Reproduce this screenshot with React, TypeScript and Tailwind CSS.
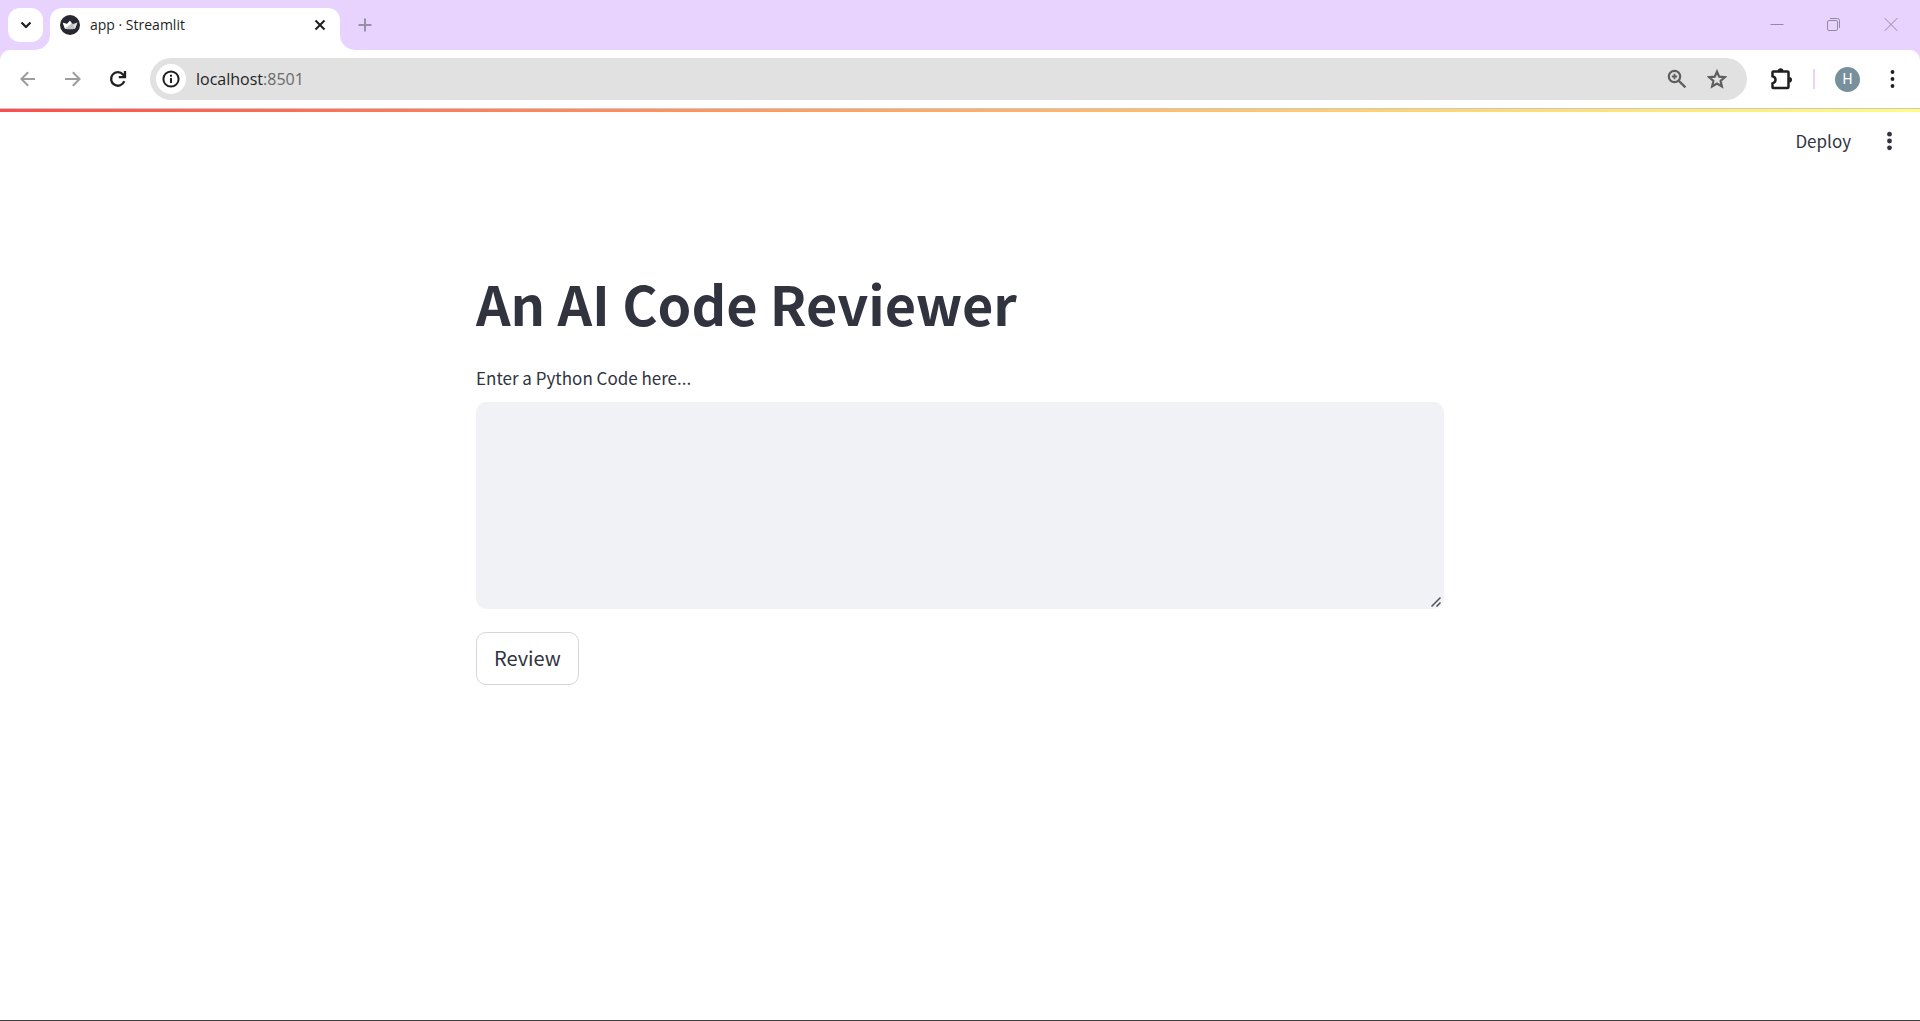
import React from "react";

const SOURCE = "font-['Noto_Sans_CJK_SC','Noto_Sans',sans-serif]";
const CHROME = "font-['Open_Sans','Noto_Sans',sans-serif]";

function Flare({ className }: { className: string }) {
  return (
    <svg className={className} width="15" height="15" viewBox="0 0 15 15" fill="#fff" aria-hidden="true">
      <path d="M15 0V15H0A15 15 0 0 0 15 0Z" />
    </svg>
  );
}

function Crown() {
  return (
    <svg width="20" height="20" viewBox="0 0 20 20" className="shrink-0" aria-hidden="true">
      <circle cx="10" cy="10" r="10" fill="#262730" />
      <path d="M2.800 7.800 7 9 10 5.800 12.800 9 17.400 7.400 15 13.800Q10 14.800 5 13.800Z" fill="#c4c4c6" />
      <path d="M2.800 7.800 7 9 10 5.800 11.400 8.800 7 12 5 13.800Z" fill="#fff" />
      <path d="M17.400 7.400 13.400 10.400 15 13.800Z" fill="#e4e4e4" />
    </svg>
  );
}

function TabStrip() {
  return (
    <div className="flex h-[50px] items-start bg-[#e8d3ff]">
      <button aria-label="Search tabs" className="mt-2 ml-2 flex h-[34px] w-[35px] shrink-0 items-center justify-center rounded-xl bg-white">
        <svg width="12" height="8" viewBox="0 0 12 8" fill="none" stroke="#1f1f1f" strokeWidth="2.2">
          <path d="M1.500 1.500 6 6l4.500-4.500" />
        </svg>
      </button>
      <div className="relative mt-2 ml-[7px] flex h-[42px] w-[290px] shrink-0 items-center rounded-t-xl bg-white pr-[14px] pb-2 pl-[10px]">
        <Flare className="absolute bottom-0 -left-[15px]" />
        <Flare className="absolute -right-[15px] bottom-0 -scale-x-100" />
        <Crown />
        <span className={`ml-[10px] flex-1 text-sm text-[#1f1f1f] ${CHROME}`}>app · Streamlit</span>
        <button aria-label="Close tab">
          <svg width="12" height="12" viewBox="0 0 12 12" stroke="#1f1f1f" strokeWidth="2">
            <path d="M1.500 1.500l9 9M10.500 1.500l-9 9" />
          </svg>
        </button>
      </div>
      <button aria-label="New tab" className="mt-[18px] ml-[18px]">
        <svg width="14" height="14" viewBox="0 0 14 14" stroke="#9b8ea9" strokeWidth="2">
          <path d="M7 .5v13M.5 7h13" />
        </svg>
      </button>
      <div className="mt-[17px] mr-[22px] ml-auto flex items-center gap-[43px]">
        <button aria-label="Minimize">
          <svg width="14" height="14" viewBox="0 0 14 14" stroke="#948a9f" fill="none"><path d="M.5 7.500h13" /></svg>
        </button>
        <button aria-label="Restore">
          <svg width="14" height="14" viewBox="0 0 14 14" stroke="#948a9f" fill="none">
            <rect x=".5" y="3.500" width="10" height="10" rx="1.500" />
            <path d="M3 1.500H10.500Q12.500 1.500 12.500 3.500V11" />
          </svg>
        </button>
        <button aria-label="Close">
          <svg width="14" height="14" viewBox="0 0 14 14" stroke="#948a9f" fill="none"><path d="M.7 1.200l12.600 12.600M13.300 1.200.7 13.800" /></svg>
        </button>
      </div>
    </div>
  );
}

function Toolbar() {
  return (
    <div className="bg-[#e8d3ff]">
      <div className="flex h-[58px] items-center rounded-t-[10px] bg-white pl-5">
        <button aria-label="Back">
          <svg width="16" height="16" viewBox="0 0 16 16" fill="none" stroke="#9d9d9d" strokeWidth="2">
            <path d="M15 8H2M8.200 1.200 1.400 8l6.800 6.800" />
          </svg>
        </button>
        <button aria-label="Forward" className="ml-[29px]">
          <svg width="16" height="16" viewBox="0 0 16 16" fill="none" stroke="#9d9d9d" strokeWidth="2">
            <path d="M0 8h14M7.800 1.200 14.600 8l-6.800 6.800" />
          </svg>
        </button>
        <button aria-label="Reload" className="ml-7">
          <svg width="18" height="18" viewBox="0 0 18 18" fill="none" stroke="#1f1f1f" strokeWidth="2.300">
            <path d="M15.300 11.200A6.800 6.800 0 1 1 14 4.400L16 6.700" />
            <path d="M16 1v6.200H9.800" />
          </svg>
        </button>
        <div className={`ml-[23px] flex h-[42px] flex-1 items-center rounded-full bg-[#e1e1e1] pr-5 pl-[6px] ${CHROME}`}>
          <button aria-label="Site information" className="flex size-[30px] items-center justify-center rounded-full bg-white">
            <svg width="18" height="18" viewBox="0 0 18 18" fill="none" stroke="#1f1f1f" strokeWidth="2">
              <circle cx="9" cy="9" r="7.600" />
              <path d="M9 8v5M9 4.800v2" />
            </svg>
          </button>
          <p className="ml-[10px] flex-1 text-base text-[#1f1f1f]">
            localhost<span className="text-[#6a6a6a]">:8501</span>
          </p>
          <button aria-label="Zoom">
            <svg width="20" height="20" viewBox="0 0 20 20" fill="none" stroke="#5e5e5e" strokeWidth="2.200">
              <circle cx="7.500" cy="7.500" r="5.700" />
              <path d="M11.600 11.600l6.800 6.800" />
              <path d="M7.500 4.800v5.400M4.800 7.500h5.400" strokeWidth="1.800" />
            </svg>
          </button>
          <button aria-label="Bookmark this tab" className="ml-5">
            <svg width="20" height="20" viewBox="0 0 20 20" fill="none" stroke="#5e5e5e" strokeWidth="2.200">
              <path d="M10 2.600l2.200 5.100 5.600.5-4.200 3.700 1.300 5.500L10 14.500l-4.900 2.900 1.300-5.500-4.200-3.700 5.600-.5Z" />
            </svg>
          </button>
        </div>
        <button aria-label="Extensions" className="ml-6">
          <svg width="22" height="22" viewBox="0 0 22 22" aria-hidden="true">
            <path d="M1.500 4.200Q1.500 3.500 2.200 3.500H16.500Q17.500 3.500 17.500 4.500V19Q17.500 20 16.500 20H2.200Q1.500 20 1.500 19.300V15.400Q4.500 14.600 4.500 11.800T1.500 8.300Z" fill="none" stroke="#1f1f1f" strokeWidth="2.500" />
            <path d="M6.800 3a2.800 2.800 0 0 1 5.600 0ZM18.200 9a2.800 2.800 0 0 1 0 5.600Z" fill="#1f1f1f" />
          </svg>
        </button>
        <div className="ml-5 h-5 w-0.5 bg-[#e8d3ff]" />
        <button aria-label="Profile" className="ml-5 flex size-[25px] items-center justify-center rounded-full bg-[#78909c] font-['Roboto',sans-serif] text-sm text-white">
          H
        </button>
        <button aria-label="Browser menu" className="mr-[25px] ml-[30px]">
          <svg width="5" height="18" viewBox="0 0 5 18" fill="#1f1f1f">
            <circle cx="2.500" cy="2" r="1.900" /><circle cx="2.500" cy="9" r="1.900" /><circle cx="2.500" cy="16" r="1.900" />
          </svg>
        </button>
      </div>
    </div>
  );
}

export default function App() {
  return (
    <div className={`flex min-h-screen flex-col border-b border-[#3f3f3f] bg-white text-[#31333f] ${SOURCE}`}>
      <TabStrip />
      <Toolbar />
      <div className="h-px bg-[#c8c8c8]" />
      <div className="h-[3px] bg-linear-to-r from-[#ff4b4b] to-[#fffd80]" />
      <header className="flex h-[58px] items-center justify-end pr-7">
        <button className="text-[17px]">Deploy</button>
        <button aria-label="Main menu" className="ml-9">
          <svg width="5" height="20" viewBox="0 0 5 20" fill="#31333f">
            <circle cx="2.500" cy="3.200" r="2.400" /><circle cx="2.500" cy="10" r="2.400" /><circle cx="2.500" cy="16.800" r="2.400" />
          </svg>
        </button>
      </header>
      <main className="mx-auto w-full max-w-[968px] pt-[97px]">
        <h1 className="text-[54px] leading-[72px] font-bold">An AI Code Reviewer</h1>
        <form onSubmit={(e) => e.preventDefault()}>
          <label htmlFor="code" className="mt-[25px] block text-[17px] leading-7">
            Enter a Python Code here...
          </label>
          <div className="relative mt-[10px]">
            <textarea id="code" className="block h-[207px] w-full resize-none rounded-[10px] bg-[#f0f2f6] p-4 text-[17px] outline-none" />
            <svg className="absolute right-[3px] bottom-0.5" width="10" height="10" viewBox="0 0 10 10" stroke="#4e5058" strokeWidth="1.500" aria-hidden="true">
              <path d="M.5 9.500l9-9M5.500 9.500l4-4" />
            </svg>
          </div>
          <button type="submit" className="mt-[23px] flex h-[53px] items-center rounded-[10px] border border-[#d6d6d9] px-[17px] pb-0.5 text-[20px]">
            Review
          </button>
        </form>
      </main>
    </div>
  );
}
